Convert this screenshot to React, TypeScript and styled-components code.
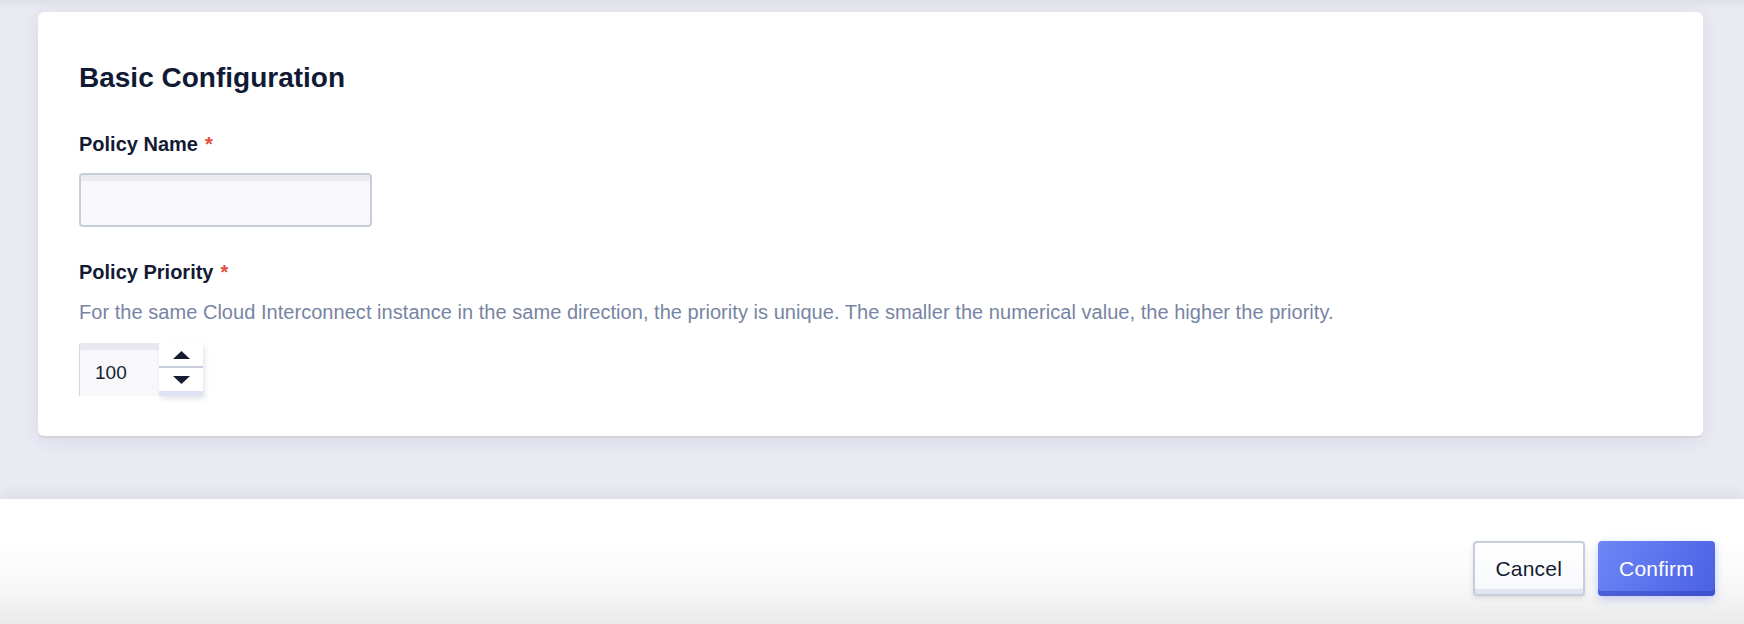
import styled, { createGlobalStyle } from "styled-components"

const GlobalStyle = createGlobalStyle`
    html, body {
        margin: 0;
        padding: 0;
        background: #e9eaf2;
    }
    body {
        font-family: "Liberation Sans", Arial, Helvetica, sans-serif;
        color: #121a34;
    }
`;

const Page = styled.div`
    width: 1744px;
    height: 624px;
    display: flex;
    flex-direction: column;
    overflow: hidden;
`;

const Main = styled.main`
    height: 499px;
    box-sizing: border-box;
    padding: 12px 41px 0 38px;
    background: #e9eaf2;
    box-shadow: inset 0 10px 10px -8px rgba(0, 0, 0, 0.07);
`;

const Card = styled.section`
    background: #fff;
    border-radius: 6px;
    padding: 50px 41px 40px;
    box-shadow: 0 2px 0 rgba(0, 0, 0, 0.05), 0 4px 18px rgba(40, 48, 90, 0.09);
`;

const Title = styled.h2`
    margin: 0 0 38px;
    font-size: 28px;
    line-height: 32px;
    font-weight: 700;
    color: #111a35;
`;

const Field = styled.div<{ gapTop?: number }>`
    display: flex;
    flex-direction: column;
    align-items: flex-start;
    margin-top: ${props => props.gapTop ?? 0}px;
`;

const Label = styled.label`
    font-size: 20px;
    line-height: 24px;
    font-weight: 700;
    color: #121a34;
`;

const Required = styled.span`
    color: #e14b3b;
    margin-left: 7px;
    font-weight: 700;
`;

const Hint = styled.p`
    margin: 16px 0 0;
    font-size: 20px;
    line-height: 24px;
    letter-spacing: 0.04px;
    color: #7784a4;
`;

const TextInput = styled.input`
    margin-top: 17px;
    width: 293px;
    height: 54px;
    box-sizing: border-box;
    border: 2px solid #c8cddd;
    border-radius: 4px;
    background: #f8f8fa;
    box-shadow: inset 0 6px 0 #ececef;
    outline: none;
    font: inherit;
`;

const Stepper = styled.div`
    margin-top: 19px;
    display: flex;
    height: 53px;
`;

const StepValue = styled.div`
    width: 80px;
    box-sizing: border-box;
    padding: 6px 0 0 15px;
    display: flex;
    align-items: center;
    background: #f8f8fb;
    border-left: 1px solid #d3d6e5;
    border-top-left-radius: 3px;
    box-shadow: inset 0 7px 0 #e8e9f0;
    font-size: 19px;
    color: #161c33;
`;

const StepButtons = styled.div`
    width: 44px;
    display: flex;
    flex-direction: column;
    background: #fff;
    border-bottom: 5px solid #dfe2f3;
    box-shadow: 2px 3px 5px rgba(30, 40, 80, 0.12);
`;

const StepButton = styled.button<{ down?: boolean }>`
    flex: 1;
    display: flex;
    align-items: center;
    justify-content: center;
    padding: 0;
    background: transparent;
    border: none;
    border-top: ${props => props.down ? "2px solid #c8cddd" : "none"};
    cursor: pointer;
`;

const Footer = styled.footer`
    flex: 1;
    display: flex;
    justify-content: flex-end;
    align-items: flex-start;
    gap: 13px;
    padding: 42px 29px 0 0;
    background: linear-gradient(to bottom, #ffffff 0%, #ffffff 35%, #f7f7f7 72%, #eaeaea 100%);
    box-shadow: 0 -4px 14px rgba(0, 0, 0, 0.07);
    position: relative;
`;

const Button = styled.button<{ primary?: boolean }>`
    height: 55px;
    box-sizing: border-box;
    padding: 0 21px;
    border-radius: 4px;
    font-family: inherit;
    font-size: 21px;
    letter-spacing: 0.2px;
    cursor: pointer;
    color: ${props => props.primary ? "#fff" : "#141b33"};
    border: ${props => props.primary ? "none" : "2px solid #c8cddd"};
    background: ${props => props.primary
        ? "linear-gradient(120deg, #6d87f6 0%, #4a60e4 100%)"
        : "linear-gradient(to bottom, #ffffff, #f7f8fa)"};
    box-shadow: ${props => props.primary
        ? "inset 0 -5px 0 rgba(45, 60, 180, 0.45), 0 3px 10px rgba(80, 100, 240, 0.3)"
        : "inset 0 -5px 0 #e1e4f1, 0 2px 5px rgba(30, 40, 80, 0.12)"};
`;

const Triangle = ({ down }: { down?: boolean }) => (
    <svg width="17" height="8" viewBox="0 0 17 8">
        <polygon points={down ? "0,0 17,0 8.5,8" : "0,8 17,8 8.5,0"} fill="#141b33" />
    </svg>
);

const App = () => {
    return (
        <>
            <GlobalStyle />
            <Page>
                <Main>
                    <Card>
                        <Title>Basic Configuration</Title>
                        <Field>
                            <Label>Policy Name<Required>*</Required></Label>
                            <TextInput type="text" />
                        </Field>
                        <Field gapTop={33}>
                            <Label>Policy Priority<Required>*</Required></Label>
                            <Hint>For the same Cloud Interconnect instance in the same direction, the priority is unique. The smaller the numerical value, the higher the priority.</Hint>
                            <Stepper>
                                <StepValue>100</StepValue>
                                <StepButtons>
                                    <StepButton type="button"><Triangle /></StepButton>
                                    <StepButton type="button" down><Triangle down /></StepButton>
                                </StepButtons>
                            </Stepper>
                        </Field>
                    </Card>
                </Main>
                <Footer>
                    <Button type="button">Cancel</Button>
                    <Button type="button" primary>Confirm</Button>
                </Footer>
            </Page>
        </>
    );
};

export default App;
